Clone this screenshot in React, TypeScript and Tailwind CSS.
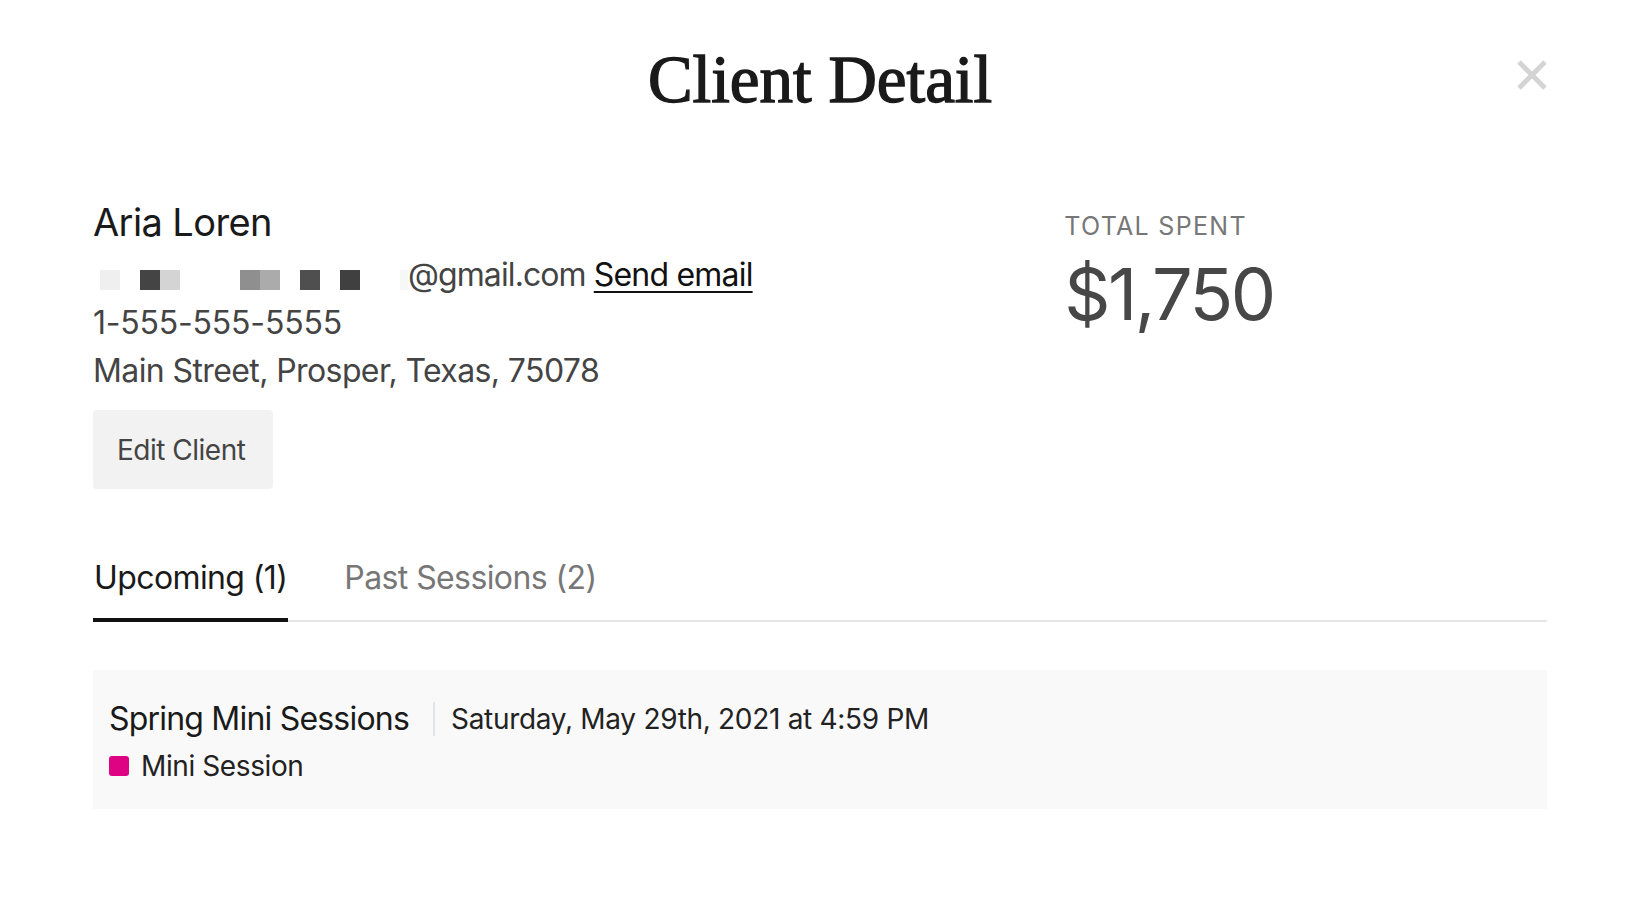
import React from 'react';

const sans = { fontFamily: 'Inter, "Liberation Sans", sans-serif' };

const pixels = [
  '#efefef', '', '#444444', '#d4d4d4', '', '', '', '#8f8f8f', '#ababab', '', '#4f4f4f', '', '#404040', '', '',
];

const CloseIcon: React.FC = () => (
  <svg width="30" height="30" viewBox="0 0 30 30" fill="none">
    <path d="M2 2L28 28M28 2L2 28" stroke="#d4d4d4" strokeWidth="4.8" strokeLinecap="butt" />
  </svg>
);

export default function App() {
  return (
    <div className="min-h-screen w-full bg-white px-[93px] text-[#444]" style={sans}>
      <div className="relative pt-[46px]">
        <h1
          className="text-center text-[67px] leading-none font-normal text-[#1a1a1a] [-webkit-text-stroke:1.4px_#1a1a1a]"
          style={{ fontFamily: '"Liberation Serif", "DejaVu Serif", serif' }}
        >
          Client Detail
        </h1>
        <button className="absolute right-0 top-[60px]">
          <CloseIcon />
        </button>
      </div>

      <div className="mt-[86px] grid grid-cols-3">
        <div className="col-span-2">
          <div className="text-[38px] leading-[46px] tracking-[-0.6px] text-[#1a1a1a]">Aria Loren</div>
          <div className="mt-[6px] flex h-[48px] text-[32px] leading-[48px] tracking-[-0.6px]">
            <div className="ml-[7px] flex self-end mb-[9px]">
              {pixels.map((c, i) => (
                <span key={i} className="h-5 w-5" style={{ backgroundColor: c || 'transparent' }} />
              ))}
              <span className="h-5 w-2 bg-[#f5f8f5]" />
            </div>
            <span className="tracking-[-0.9px] text-[#444]">@gmail.com</span>
            <a className="ml-[8px] tracking-[-0.8px] text-[#111] underline decoration-2 underline-offset-[5px]" href="#">
              Send email
            </a>
          </div>
          <div className="text-[32px] leading-[48px] tracking-[-0.2px]">1-555-555-5555</div>
          <div className="text-[32px] leading-[48px] tracking-[-0.6px]">Main Street, Prosper, Texas, 75078</div>
          <button className="mt-[15px] flex h-[79px] w-[180px] items-center whitespace-nowrap rounded-[4px] bg-[#f2f2f2] px-6 text-[28px] tracking-[-0.5px] text-[#444]">
            Edit Client
          </button>
        </div>
        <div className="pt-3 pl-[2px]">
          <div className="text-[25px] leading-[30px] tracking-[1.3px] text-[#777]">TOTAL SPENT</div>
          <div className="mt-[17px] text-[72px] leading-none tracking-[-2.5px] text-[#474747]">$1,750</div>
        </div>
      </div>

      <div className="mt-[65px] flex gap-[56px] border-b-2 border-[#e4e6ea]">
        <div className="-mb-[2px] border-b-4 border-[#111] px-[1px] pb-4 text-[32px] leading-[48px] tracking-[-0.6px] text-[#1a1a1a]">
          Upcoming (1)
        </div>
        <div className="-mb-[2px] pb-4 text-[32px] leading-[48px] tracking-[-0.6px] text-[#777]">Past Sessions (2)</div>
      </div>

      <div className="mt-12 bg-[#f9f9f9] px-4 pt-[25px] pb-[23px]">
        <div className="flex items-center">
          <span className="text-[32px] leading-[48px] tracking-[-0.8px] text-[#1a1a1a]">Spring Mini Sessions</span>
          <span className="ml-[24px] mr-4 h-[34px] w-[2px] bg-[#e1e4e8]" />
          <span className="text-[28px] leading-[48px] tracking-[-0.3px] text-[#222]">Saturday, May 29th, 2021 at 4:59 PM</span>
        </div>
        <div className="mt-[3px] flex items-center gap-3">
          <span className="h-5 w-5 rounded-[3px] bg-[#de0383]" />
          <span className="text-[28px] leading-[40px] tracking-[-0.4px] text-[#222]">Mini Session</span>
        </div>
      </div>
    </div>
  );
}
